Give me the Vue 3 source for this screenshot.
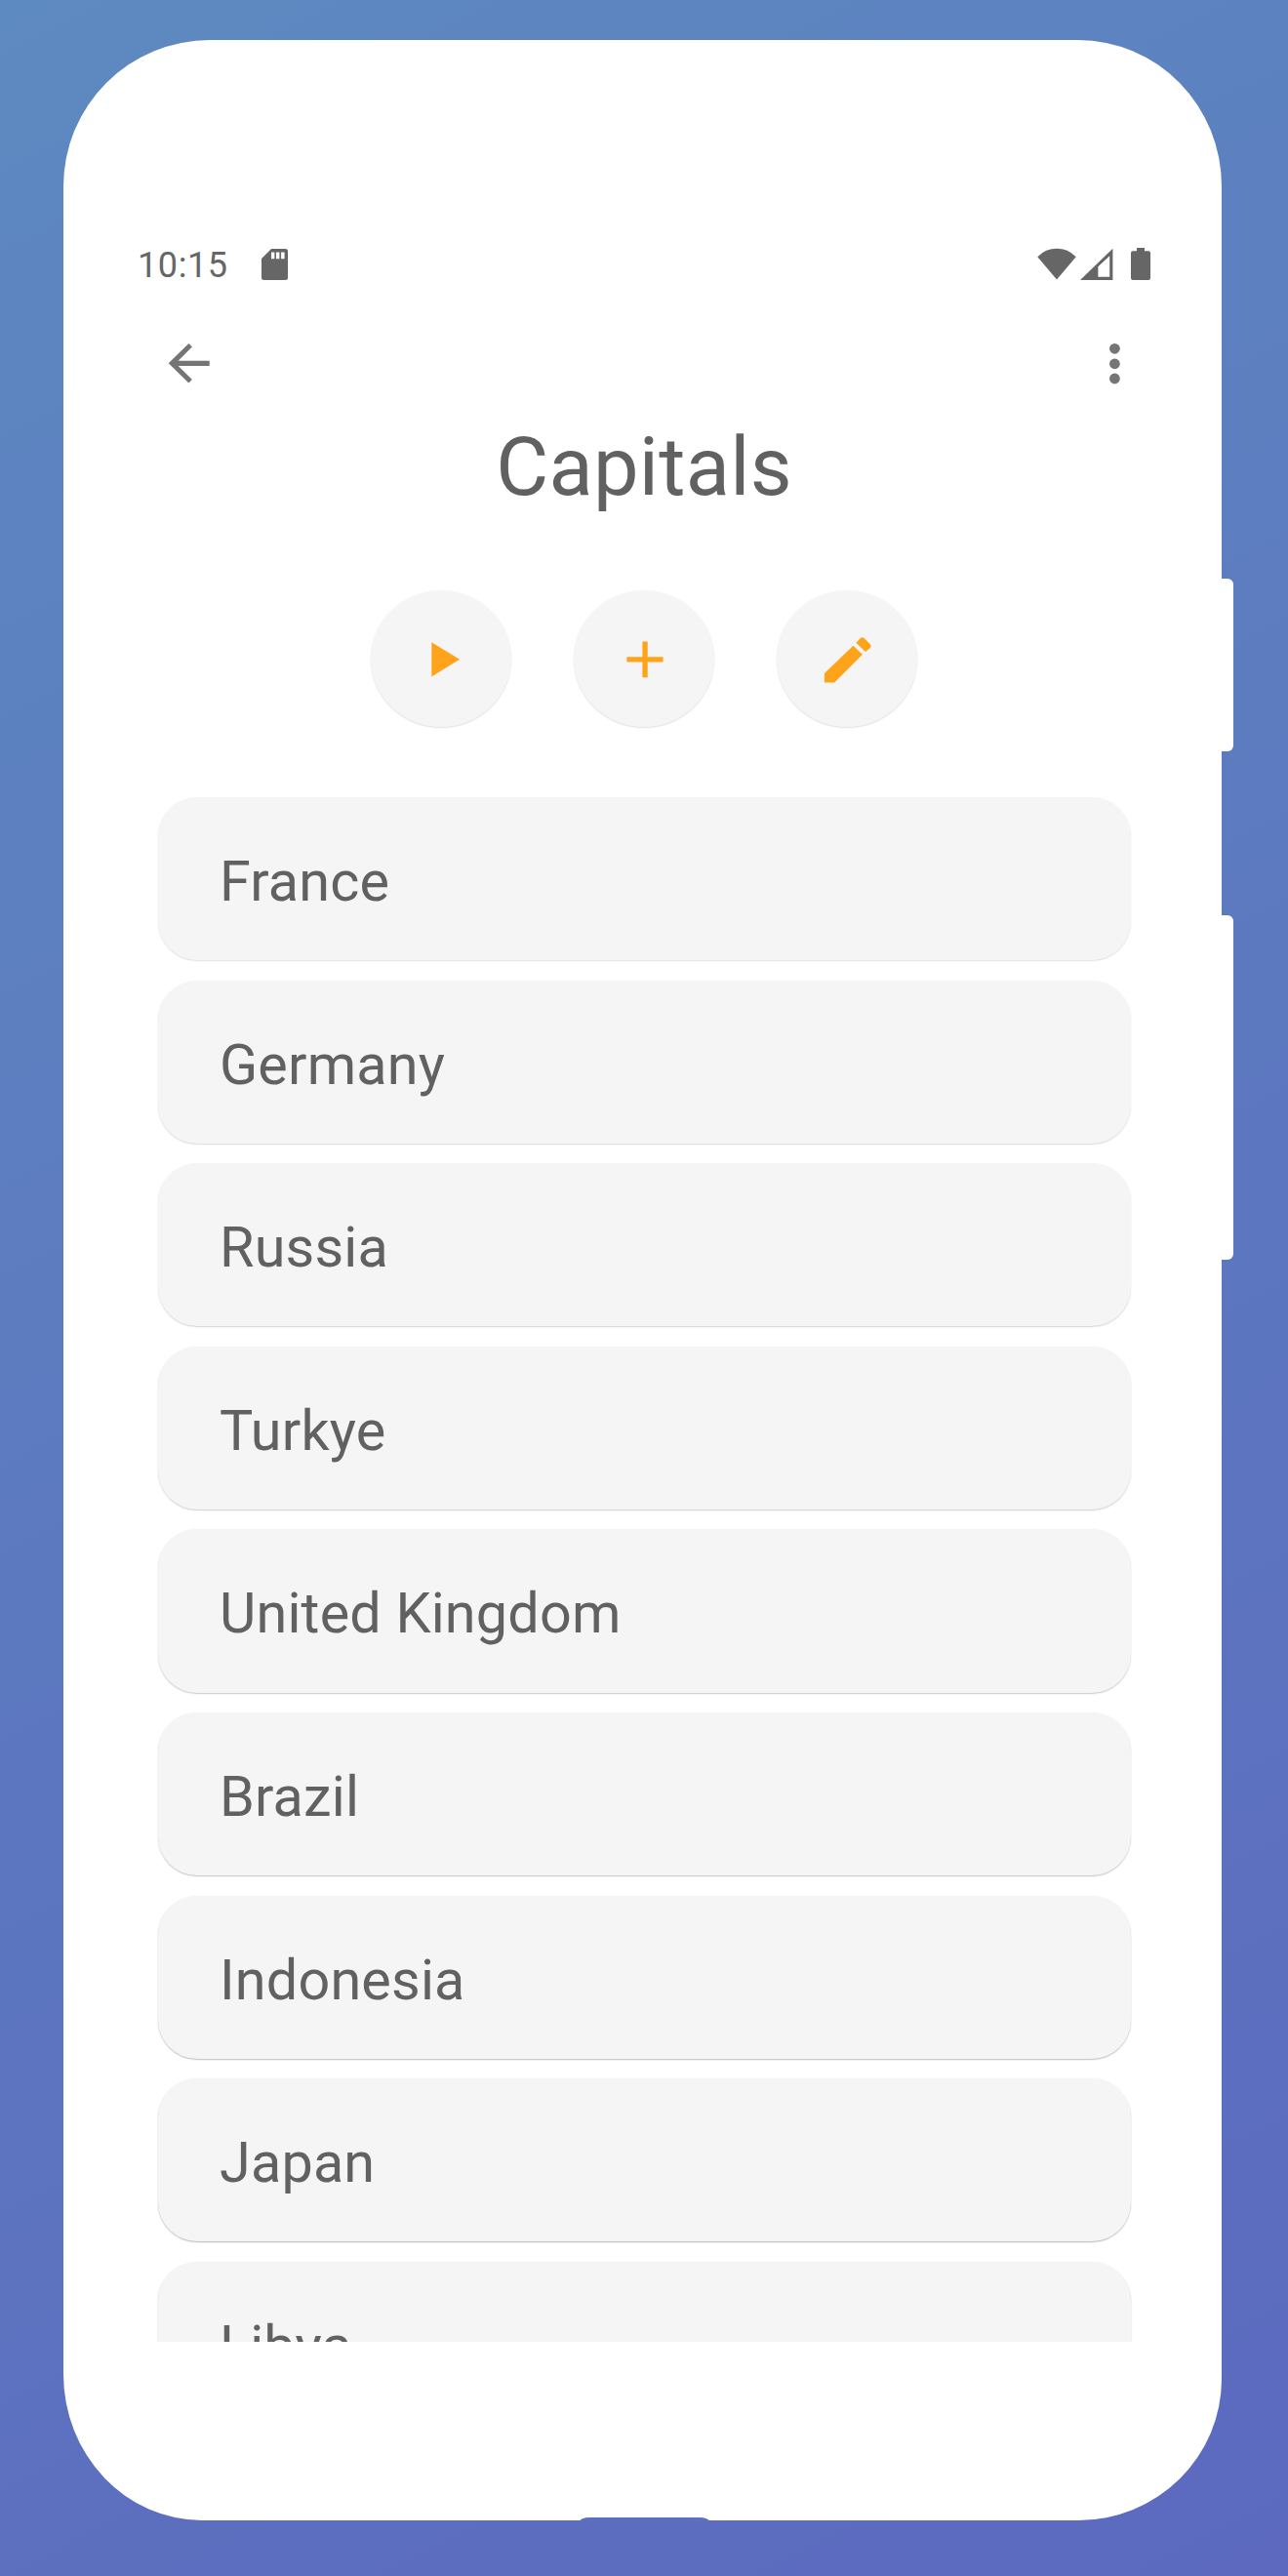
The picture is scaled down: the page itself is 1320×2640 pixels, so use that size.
<script setup>
const countries = [
  'France',
  'Germany',
  'Russia',
  'Turkye',
  'United Kingdom',
  'Brazil',
  'Indonesia',
  'Japan',
  'Libya',
]

// Cards further down the screen cast a slightly stronger shadow.
const shadow = (i) => ({ '--shade': (0.13 + i * 0.022).toFixed(3) })
</script>

<template>
  <div class="page">
    <div class="phone">
      <header class="status">
        <span class="time">10:15</span>
        <svg class="sd" viewBox="0 0 27 32" width="27" height="32">
          <path
            fill-rule="evenodd"
            d="M10 0H24.5Q27 0 27 2.5V29.5Q27 32 24.5 32H2.5Q0 32 0 29.5V10ZM10 3.5V10.3H13.4V3.5ZM15 3.5V10.3H18.4V3.5ZM20.1 3.5V10.3H23.6V3.5Z"
          />
        </svg>
        <span class="spacer"></span>
        <svg class="wifi" viewBox="0 0 40 33" width="40" height="33">
          <path d="M0.3 9.2Q8.5 0.8 20 0.8T39.7 9.2L20 32.6Z" />
        </svg>
        <svg class="signal" viewBox="0 0 34 33" width="34" height="33">
          <path fill-rule="evenodd" d="M0 33L33.4 0.8V33ZM18.4 19.3V29.7H30.2V8.2Z" />
        </svg>
        <svg class="battery" viewBox="0 0 20 33" width="20" height="33">
          <path
            d="M6 0H14V3.3H18Q20 3.3 20 5.3V31Q20 33 18 33H2Q0 33 0 31V5.3Q0 3.3 2 3.3H6Z"
          />
        </svg>
      </header>

      <nav class="toolbar">
        <svg viewBox="0 0 42 42" width="42" height="42">
          <path
            d="M41.7 17.7V22.9H9.7L23.9 37.1L20.4 40.5L-0.3 20.3L20.4 0L23.9 3.5L9.7 17.7Z"
          />
        </svg>
        <svg viewBox="0 0 11 42" width="11" height="42">
          <circle cx="5.4" cy="5.3" r="5.4" />
          <circle cx="5.4" cy="20.8" r="5.4" />
          <circle cx="5.4" cy="36" r="5.4" />
        </svg>
      </nav>

      <h1>Capitals</h1>

      <div class="actions">
        <button aria-label="Play">
          <svg viewBox="0.5 0 144 140" width="144" height="140">
            <path d="M62.8 53.2L91.6 70.8L62.8 88.5Z" />
          </svg>
        </button>
        <button aria-label="Add">
          <svg viewBox="0.5 0 144 140" width="144" height="140">
            <path
              d="M70.9 52.6H76.2V68.2H92V73.6H76.2V89.2H70.9V73.6H54.9V68.2H70.9Z"
            />
          </svg>
        </button>
        <button aria-label="Edit">
          <svg viewBox="0.5 0 144 140" width="144" height="140">
            <path
              d="M49.4 84.9L78.9 56.7L88.4 65.7L59.7 94.6H49.4ZM81.9 53.7L86.3 49Q88 47.4 89.8 48.8L96.3 55.2Q98 57 96.4 58.9L91.5 63Z"
            />
          </svg>
        </button>
      </div>

      <ul class="list">
        <li v-for="(name, i) in countries" :key="name" :style="shadow(i)">{{ name }}</li>
      </ul>

      <i class="side power"></i>
      <i class="side volume"></i>
      <i class="notch"></i>
    </div>
  </div>
</template>

<style>
body {
  margin: 0;
}
</style>

<style scoped>
.page {
  box-sizing: border-box;
  width: 1320px;
  height: 2640px;
  padding: 41px 68px 0 65px;
  overflow: hidden;
  background: linear-gradient(153deg, #5d8ac0 0%, #5d87c0 6%, #5c69bf 100%);
  font-family: Roboto, 'Liberation Sans', sans-serif;
  color: #616161;
}
.phone {
  position: relative;
  box-sizing: border-box;
  display: flex;
  flex-direction: column;
  height: 2542.4px;
  background: #fff;
  border-radius: 150px 147px 147px 142px / 150px 150px 145px 150px;
}
.status {
  display: flex;
  flex: none;
  height: 33px;
  margin-top: 213px;
  padding: 0 73px 0 76px;
  align-items: center;
  fill: #666;
  color: #666;
}
.time {
  width: 127px;
  padding-top: 3px;
  font-size: 36px;
  line-height: 33px;
  letter-spacing: 0.6px;
}
.spacer {
  flex: 1;
}
.signal {
  margin: 0 18px 0 4px;
}
.toolbar {
  display: flex;
  flex: none;
  justify-content: space-between;
  align-items: center;
  height: 42px;
  margin-top: 65px;
  padding: 0 104px 0 108px;
  fill: #757575;
}
.toolbar svg {
  overflow: visible;
}
h1 {
  flex: none;
  margin: 38px 0 1px 3px;
  font-size: 83px;
  font-weight: 400;
  line-height: 94px;
  text-align: center;
  letter-spacing: 0.3px;
}
.actions {
  display: flex;
  flex: none;
  justify-content: center;
  gap: 63.8px;
  margin: 78px 0 0 2.6px;
}
.actions button {
  width: 144px;
  height: 140px;
  padding: 0;
  border: 0;
  border-radius: 50%;
  background: #f5f5f5;
  fill: #ffa31a;
  box-shadow: 0 1px 1.5px rgba(0, 0, 0, 0.13);
}
.actions svg {
  display: block;
}
.list {
  display: flex;
  flex: none;
  flex-direction: column;
  gap: 20.3px;
  height: 1584px;
  margin: 71px 0 0;
  padding: 1px 93.5px 0 96.5px;
  box-sizing: border-box;
  overflow: hidden;
  list-style: none;
}
.list li {
  flex: none;
  box-sizing: border-box;
  height: 167.3px;
  padding-left: 63.5px;
  border-radius: 40px;
  background: #f5f5f5;
  box-shadow: 0 1px 1.5px rgba(0, 0, 0, var(--shade));
  font-size: 57.5px;
  line-height: 174px;
  letter-spacing: 0.2px;
}
.side {
  position: absolute;
  left: 100%;
  width: 12px;
  background: #fff;
  border-radius: 0 6px 6px 0;
}
.power {
  top: 552px;
  height: 177px;
}
.volume {
  top: 897px;
  height: 353px;
}
.notch {
  position: absolute;
  bottom: -1px;
  left: 528.5px;
  width: 133px;
  height: 4px;
  background: #5c6fc0;
  border-radius: 10px 10px 0 0 / 4px 4px 0 0;
}
</style>
